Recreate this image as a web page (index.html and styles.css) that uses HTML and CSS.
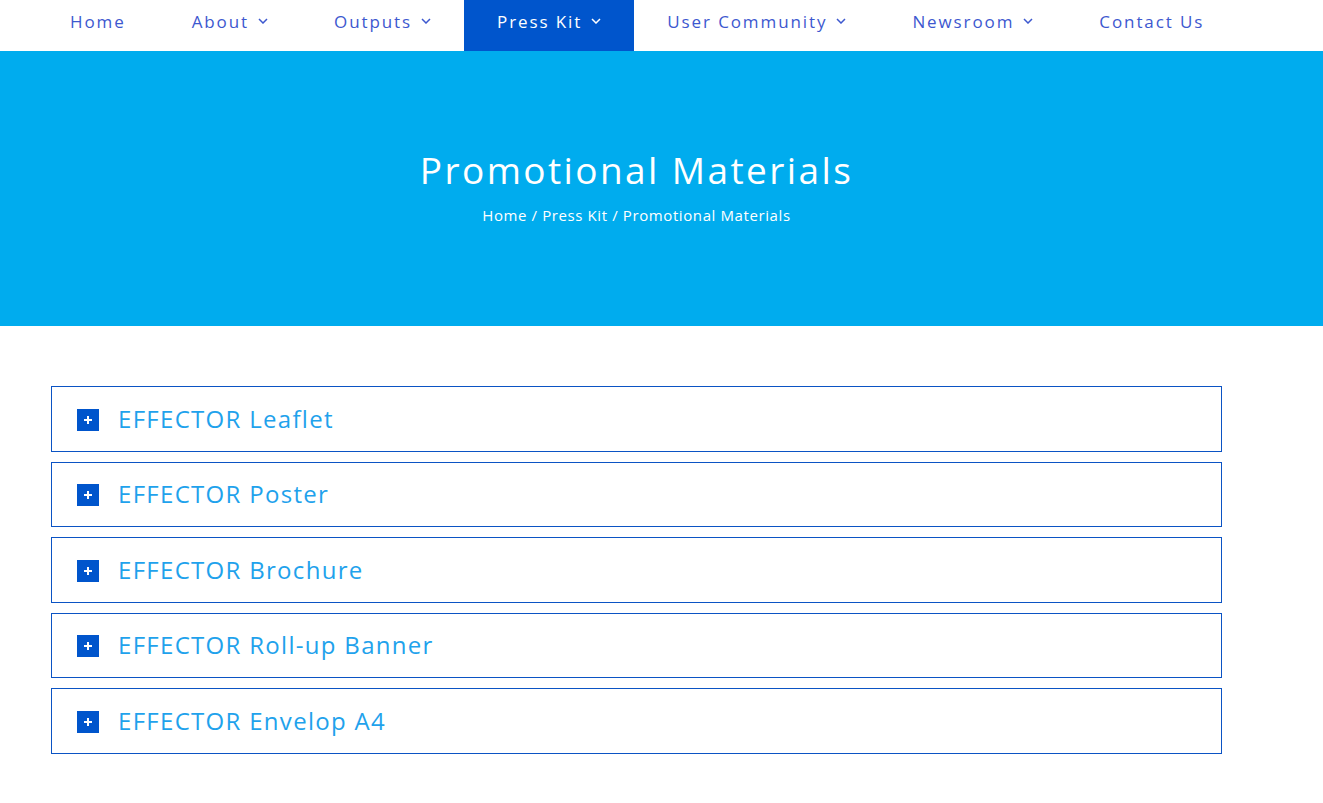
FILE: index.html
```html
<!DOCTYPE html>
<html lang="en">
<head>
<meta charset="utf-8">
<title>Promotional Materials</title>
<link rel="stylesheet" href="styles.css">
</head>
<body>
<header class="topbar">
  <nav class="menu">
    <a class="item" href="#">Home</a>
    <a class="item" href="#">About<svg class="chev" viewBox="0 0 10 6"><path d="M1 1l4 4 4-4"/></svg></a>
    <a class="item" href="#">Outputs<svg class="chev" viewBox="0 0 10 6"><path d="M1 1l4 4 4-4"/></svg></a>
    <a class="item active" href="#">Press Kit<svg class="chev" viewBox="0 0 10 6"><path d="M1 1l4 4 4-4"/></svg></a>
    <a class="item" href="#">User Community<svg class="chev" viewBox="0 0 10 6"><path d="M1 1l4 4 4-4"/></svg></a>
    <a class="item" href="#">Newsroom<svg class="chev" viewBox="0 0 10 6"><path d="M1 1l4 4 4-4"/></svg></a>
    <a class="item" href="#">Contact Us</a>
  </nav>
</header>
<section class="hero">
  <h1 class="hero-title">Promotional Materials</h1>
  <div class="crumbs"><a href="#">Home</a> / <a href="#">Press Kit</a> / <span>Promotional Materials</span></div>
</section>
<main class="content">
  <div class="accordion">
    <div class="panel"><span class="plus"></span><span class="ptitle">EFFECTOR Leaflet</span></div>
    <div class="panel"><span class="plus"></span><span class="ptitle">EFFECTOR Poster</span></div>
    <div class="panel"><span class="plus"></span><span class="ptitle">EFFECTOR Brochure</span></div>
    <div class="panel"><span class="plus"></span><span class="ptitle">EFFECTOR Roll-up Banner</span></div>
    <div class="panel"><span class="plus"></span><span class="ptitle">EFFECTOR Envelop A4</span></div>
  </div>
</main>
</body>
</html>
```
FILE: styles.css
```css
* { box-sizing: border-box; }
body {
  margin: 0;
  background: #fff;
  font-family: "Open Sans", "DejaVu Sans", sans-serif;
}
a { text-decoration: none; color: inherit; }

.topbar {
  height: 51px;
  background: #fff;
}
.menu {
  display: flex;
  padding-left: 37px;
  height: 51px;
}
.item {
  display: flex;
  align-items: center;
  gap: 9px;
  height: 42px;
  padding: 0 33px;
  color: #3d58cf;
  font-size: 17px;
  letter-spacing: 1.9px;
}
.item.active {
  background: #0055cc;
  color: #fff;
  height: 51px;
  padding-bottom: 9px;
}
.chev {
  width: 10px;
  height: 6px;
  fill: none;
  stroke: currentColor;
  stroke-width: 1.5;
}

.hero {
  height: 275px;
  background: #00acee;
  color: #fff;
  display: flex;
  flex-direction: column;
  align-items: center;
  padding: 96px 50px 0 0;
}
.hero-title {
  margin: 0;
  font-weight: 400;
  font-size: 37px;
  letter-spacing: 2.4px;
  line-height: 46px;
}
.crumbs {
  margin-top: 12px;
  font-size: 15px;
  line-height: 20px;
  letter-spacing: 0.6px;
}

.content {
  padding: 60px 0 40px 51px;
}
.accordion {
  width: 1171px;
  display: flex;
  flex-direction: column;
  gap: 10px;
}
.panel {
  height: 65.5px;
  border: 1px solid #0b53c4;
  display: flex;
  align-items: center;
  padding-left: 25px;
  gap: 19px;
}
.plus {
  width: 22px;
  height: 22px;
  background: #0055cc;
  position: relative;
  flex: none;
  margin-top: 2px;
}
.plus::before, .plus::after {
  content: "";
  position: absolute;
  background: #fff;
  left: 50%;
  top: 50%;
  transform: translate(-50%, -50%);
}
.plus::before { width: 8px; height: 2px; }
.plus::after { width: 2px; height: 8px; }
.ptitle {
  color: #1fa2ec;
  font-size: 24px;
  letter-spacing: 1.3px;
  line-height: 30px;
}
```
